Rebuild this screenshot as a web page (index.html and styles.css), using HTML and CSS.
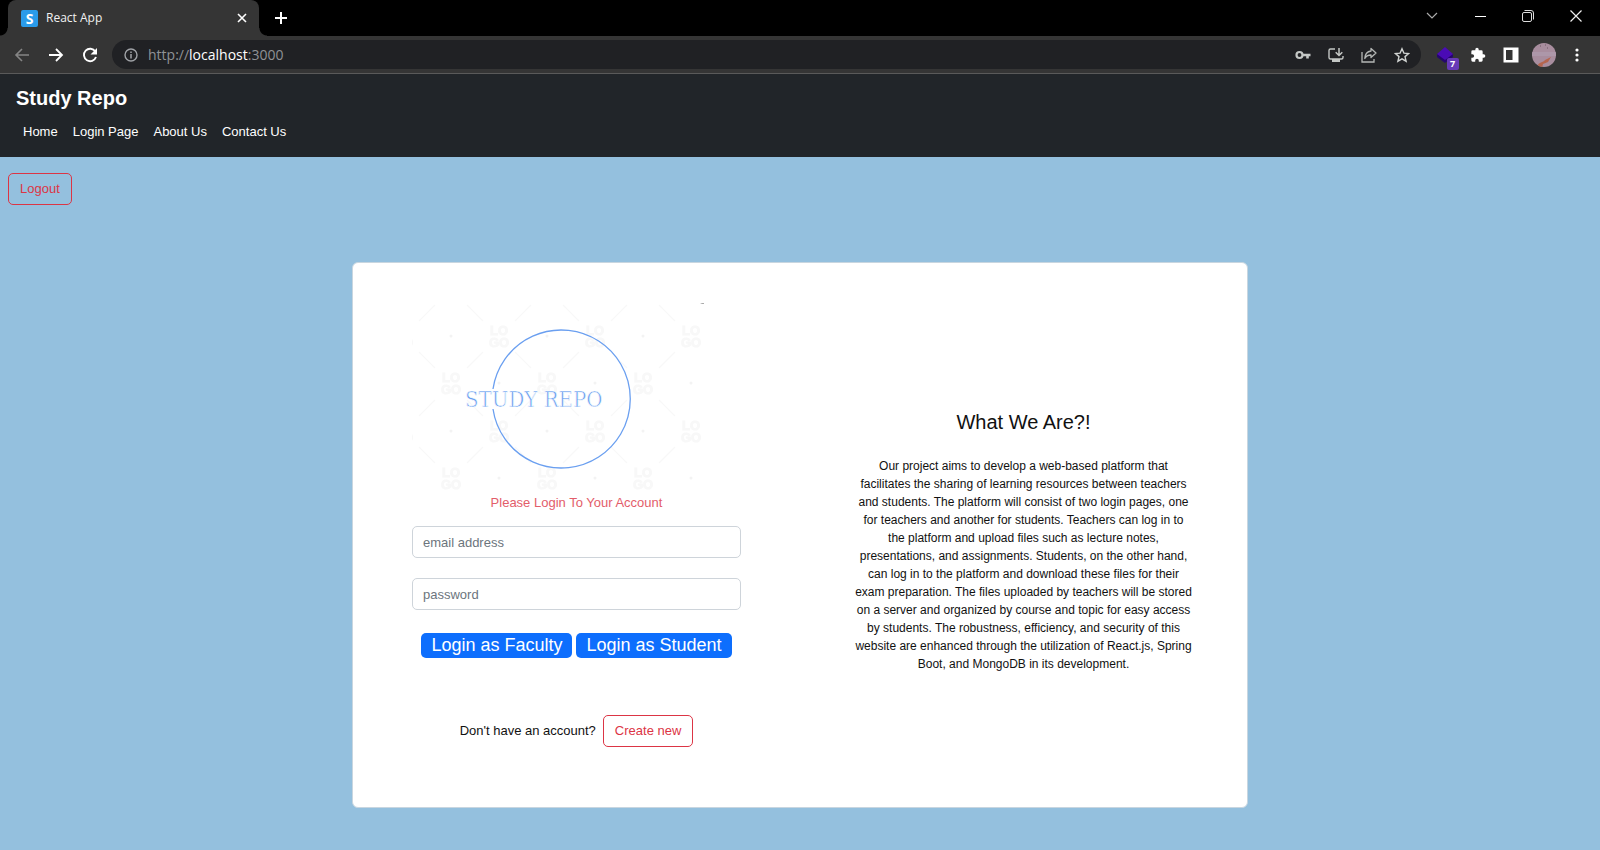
FILE: index.html
```html
<!DOCTYPE html>
<html lang="en">
<head>
<meta charset="utf-8">
<meta name="viewport" content="width=device-width, initial-scale=1">
<title>React App</title>
<link rel="stylesheet" href="styles.css">
</head>
<body>
<header class="browser">
  <div class="tabstrip">
    <div class="tab">
      <span class="favicon">S</span>
      <span class="tab-title">React App</span>
      <button class="icon-btn tab-close" aria-label="Close tab"><svg width="10" height="10" viewBox="0 0 10 10"><path d="M1 1l8 8M9 1l-8 8" stroke="#fff" stroke-width="1.6"/></svg></button>
    </div>
    <button class="icon-btn new-tab" aria-label="New tab"><svg width="14" height="14" viewBox="0 0 14 14"><path d="M7 1v12M1 7h12" stroke="#fff" stroke-width="2"/></svg></button>
    <div class="window-controls">
      <button class="icon-btn" aria-label="Search tabs"><svg width="12" height="12" viewBox="0 0 12 12"><path d="M1 3l5 5 5-5" fill="none" stroke="#aaa" stroke-width="1.2"/></svg></button>
      <button class="icon-btn" aria-label="Minimize"><svg width="12" height="12" viewBox="0 0 12 12"><path d="M1 6.500h11" stroke="#fff"/></svg></button>
      <button class="icon-btn" aria-label="Restore"><svg width="12" height="12" viewBox="0 0 12 12"><rect x=".5" y="2.500" width="9" height="9" rx="1.500" fill="none" stroke="#ddd"/><path d="M2.500 .5h6.500a2.500 2.500 0 0 1 2.500 2.500v6.500" fill="none" stroke="#ddd"/></svg></button>
      <button class="icon-btn" aria-label="Close"><svg width="12" height="12" viewBox="0 0 12 12"><path d="M.5 .5l11 11M11.500 .5l-11 11" stroke="#eee" stroke-width="1.200"/></svg></button>
    </div>
  </div>
  <div class="toolbar">
    <div class="nav-buttons">
      <button class="icon-btn" aria-label="Back"><svg width="16" height="16" viewBox="0 0 16 16"><path d="M15 8H2.500M8 2L2 8l6 6" fill="none" stroke="#858585" stroke-width="1.600"/></svg></button>
      <button class="icon-btn" aria-label="Forward"><svg width="16" height="16" viewBox="0 0 16 16"><path d="M1 8h12.500M8 2l6 6-6 6" fill="none" stroke="#fff" stroke-width="1.800"/></svg></button>
      <button class="icon-btn" aria-label="Reload"><svg width="16" height="16" viewBox="0 0 16 16"><path d="M13.300 4.500A6.200 6.200 0 1 0 14 10" fill="none" stroke="#fff" stroke-width="1.900"/><path d="M15 1v6.500H8.500z" fill="#fff"/></svg></button>
    </div>
    <div class="omnibox">
      <svg width="14" height="14" viewBox="0 0 14 14"><circle cx="7" cy="7" r="6" fill="none" stroke="#a0a3a7" stroke-width="1.400"/><path d="M7 6v4.500M7 3.400v1.600" stroke="#a0a3a7" stroke-width="1.500"/></svg>
      <span class="url">http://<span class="url-host">localhost</span>:3000</span>
      <span class="omnibox-actions">
        <svg width="16" height="16" viewBox="0 0 16 16"><circle cx="4.500" cy="8" r="3" fill="none" stroke="#c4c7c5" stroke-width="2.200"/><path d="M8 8h7.500M12.500 8v3.500" stroke="#c4c7c5" stroke-width="2.600" fill="none"/></svg>
        <svg width="16" height="16" viewBox="0 0 16 16"><path d="M7 2H2.500A1.500 1.500 0 0 0 1 3.500v7A1.500 1.500 0 0 0 2.500 12h11a1.500 1.500 0 0 0 1.500-1.500V9" fill="none" stroke="#c4c7c5" stroke-width="1.400"/><path d="M4 12h8v3H4z" fill="#c4c7c5"/><path d="M11 1v7M7.700 5.200L11 8.500l3.300-3.300" fill="none" stroke="#c4c7c5" stroke-width="1.500"/></svg>
        <svg width="16" height="16" viewBox="0 0 16 16"><path d="M1 5v10h12v-3" fill="none" stroke="#b4b7b5" stroke-width="1.300"/><path d="M10 1.500l5 4.500-5 4.500V8C7 8 5 9 3.800 11.500 4 7.500 6 4.500 10 4z" fill="none" stroke="#b4b7b5" stroke-width="1.300" stroke-linejoin="round"/></svg>
        <svg width="16" height="16" viewBox="0 0 16 16"><path d="M8 1.800l1.900 4.300 4.700.4-3.600 3.100 1.100 4.600L8 11.800l-4.100 2.400L5 9.600 1.400 6.500l4.700-.4z" fill="none" stroke="#d0d3d1" stroke-width="1.400"/></svg>
      </span>
    </div>
    <div class="extensions">
      <span class="extension">
        <svg width="18" height="18" viewBox="0 0 18 18"><path d="M1 8v3l8 6 8-6V8z" fill="#25066e"/><path d="M9 1l8 7-8 6-8-6z" fill="#4a0bb5"/></svg>
        <span class="badge">7</span>
      </span>
      <svg width="16" height="16" viewBox="0 0 24 24"><path d="M20.500 11H19V7a2 2 0 0 0-2-2h-4V3.500a2.500 2.500 0 0 0-5 0V5H4a2 2 0 0 0-2 2v3.800h1.500a2.700 2.700 0 0 1 0 5.400H2V20a2 2 0 0 0 2 2h3.800v-1.500a2.700 2.700 0 0 1 5.400 0V22H17a2 2 0 0 0 2-2v-4h1.500a2.500 2.500 0 0 0 0-5z" fill="#fff"/></svg>
      <svg width="16" height="16" viewBox="0 0 16 16"><path d="M.5 .5h15v15H.5zM3 3v10h6.500V3z" fill="#fff" fill-rule="evenodd"/></svg>
      <svg width="24" height="24" viewBox="0 0 24 24"><defs><clipPath id="face"><circle cx="12" cy="12" r="12"/></clipPath></defs><g clip-path="url(#face)"><path d="M0 0h24v24H0z" fill="#a88d9e"/><path d="M0 9h24v4H0z" fill="#ad97a9"/><path d="M5 24c2-6 6-4 8-7l6-3-3 5-5 2-1 4z" fill="#b5654e"/><path d="M8 3h1M13 2h1M15 5h1" stroke="#6e5665"/></g></svg>
      <svg width="16" height="16" viewBox="0 0 16 16"><g fill="#fff"><circle cx="8" cy="3" r="1.600"/><circle cx="8" cy="8" r="1.600"/><circle cx="8" cy="13" r="1.600"/></g></svg>
    </div>
  </div>
</header>

<div class="site-header">
  <div class="brand">Study Repo</div>
  <nav class="site-nav">
    <a href="#home">Home</a>
    <a href="#login">Login Page</a>
    <a href="#about">About Us</a>
    <a href="#contact">Contact Us</a>
  </nav>
</div>

<main class="page">
  <button class="btn btn-outline">Logout</button>
  <section class="card">
    <div class="login">
      <svg class="logo" width="292" height="190" viewBox="0 0 292 190" role="img" aria-label="Study Repo logo">
        <defs>
          <pattern id="watermark" x="15" y="10" width="96" height="95" patternUnits="userSpaceOnUse">
            <g class="mark" text-anchor="middle">
              <text x="72" y="23">LO</text><text x="72" y="35">GO</text>
              <text x="24" y="70">LO</text><text x="24" y="82">GO</text>
            </g>
            <path d="M56 40L40 56M88 40l16 16M-8 40L8 56M40-7L56 9M40 88l16 16M88 9l16-16M-8 9L8-7M88 104l16-16M-8 104L8 88" stroke="#f8f8f8" stroke-width="1.200"/>
            <circle cx="24" cy="24" r="1.500" fill="#f3f3f3"/><circle cx="72" cy="71" r="1.500" fill="#f3f3f3"/>
          </pattern>
        </defs>
        <path d="M0 0h292v190H0z" fill="url(#watermark)"/>
        <path d="M288 1h4v1h-2z" fill="#aaa"/>
        <path d="M81 87A69 69 0 1 1 81 107" fill="none" stroke="#6a9ff0" stroke-width="1.300"/>
        <text class="logo-text" x="53" y="105">STUDY REPO</text>
      </svg>
      <p class="prompt">Please Login To Your Account</p>
      <form class="fields">
        <input class="field" type="email" placeholder="email address" aria-label="email address">
        <input class="field" type="password" placeholder="password" aria-label="password">
        <div class="actions">
          <button class="btn-primary" type="button">Login as Faculty</button>
          <button class="btn-primary" type="button">Login as Student</button>
        </div>
      </form>
      <div class="signup">
        <span>Don't have an account?</span>
        <button class="btn btn-outline">Create new</button>
      </div>
    </div>
    <div class="about">
      <h2 class="about-title">What We Are?!</h2>
      <p class="about-text">Our project aims to develop a web-based platform that facilitates the sharing of learning resources between teachers and students. The platform will consist of two login pages, one for teachers and another for students. Teachers can log in to the platform and upload files such as lecture notes, presentations, and assignments. Students, on the other hand, can log in to the platform and download these files for their exam preparation. The files uploaded by teachers will be stored on a server and organized by course and topic for easy access by students. The robustness, efficiency, and security of this website are enhanced through the utilization of React.js, Spring Boot, and MongoDB in its development.</p>
    </div>
  </section>
</main>
</body>
</html>
```
FILE: styles.css
```css
* {
  box-sizing: border-box;
}

body {
  display: flex;
  flex-direction: column;
  min-height: 100vh;
  margin: 0;
  background: #94c0de;
  color: #111;
  font-family: "Liberation Sans", Arial, sans-serif;
  font-size: 13px;
  line-height: 20px;
}

button,
input {
  font: inherit;
}

svg {
  display: block;
  flex: none;
}

/* Browser chrome */
.browser {
  border-bottom: 1px solid #5a5a5a;
  background: #353535;
  font-family: "Open Sans", "Noto Sans", sans-serif;
}

.icon-btn {
  display: flex;
  padding: 0;
  border: 0;
  background: none;
}

.tabstrip {
  display: flex;
  align-items: center;
  height: 36px;
  padding-left: 8px;
  background: #000;
}

.tab {
  position: relative;
  display: flex;
  align-items: center;
  gap: 8px;
  width: 251px;
  height: 36px;
  padding: 0 12px 0 13px;
  border-radius: 8px 8px 0 0;
  background: #353535;
  color: #f1f1f1;
  font-size: 12px;
}

/* Flared feet of the active tab */
.tab::before,
.tab::after {
  content: "";
  position: absolute;
  bottom: 0;
  width: 8px;
  height: 8px;
}

.tab::before {
  right: 100%;
  background: radial-gradient(circle at 0 0, #000 7px, #353535 8px);
}

.tab::after {
  left: 100%;
  background: radial-gradient(circle at 100% 0, #000 7px, #353535 8px);
}

.favicon {
  width: 17px;
  height: 17px;
  border-radius: 2px;
  background: #2a9bea;
  color: #fff;
  font-size: 14px;
  font-weight: 700;
  line-height: 17px;
  text-align: center;
}

.tab-close {
  margin-left: auto;
}

.new-tab {
  margin-left: 15px;
}

.window-controls {
  display: flex;
  gap: 36px;
  margin-left: auto;
  padding: 0 18px 4px 0;
}

.toolbar {
  display: flex;
  align-items: center;
  height: 37px;
  padding: 0 7px 0 14px;
}

.nav-buttons {
  display: flex;
  gap: 18px;
}

.omnibox {
  display: flex;
  flex: 1;
  align-items: center;
  gap: 10px;
  height: 29px;
  margin: 0 7px 0 14px;
  padding: 0 11px 0 12px;
  border-radius: 15px;
  background: #202124;
}

.url {
  color: #8f9296;
  font-size: 14px;
}

.url-host {
  color: #fff;
}

.omnibox-actions {
  display: flex;
  gap: 17px;
  margin-left: auto;
}

.extensions {
  display: grid;
  grid-template-columns: repeat(5, 33px);
  align-items: center;
  justify-items: center;
}

.extension {
  position: relative;
}

.badge {
  position: absolute;
  right: -5px;
  bottom: -6px;
  width: 12px;
  height: 12px;
  border-radius: 2px;
  background: #673ab7;
  color: #fff;
  font-size: 9px;
  font-weight: 700;
  line-height: 12px;
  text-align: center;
}

/* Site header */
.site-header {
  padding: 12px 16px 15px;
  background: #212529;
  color: #fff;
}

.brand {
  font-size: 20px;
  font-weight: 700;
  line-height: 24px;
}

.site-nav {
  display: flex;
  gap: 15px;
  padding: 12px 7px 0;
}

.site-nav a {
  color: #fff;
  text-decoration: none;
}

/* Buttons */
.btn {
  height: 32px;
  padding: 0 11px;
  border: 1px solid #dc3545;
  border-radius: 5px;
}

.btn-outline {
  background: transparent;
  color: #dc3545;
}

.btn-primary {
  height: 25px;
  padding: 0 10px;
  border: 0;
  border-radius: 5px;
  background: #0d6efd;
  color: #fff;
  font-size: 18px;
  line-height: 25px;
}

/* Login page */
.page {
  flex: 1;
  padding: 16px 8px;
}

.card {
  display: grid;
  grid-template-columns: 1fr 1fr;
  width: 56vw;
  min-width: 720px;
  margin: 57px auto 27px;
  border: 1px solid #c8d6e0;
  border-radius: 6px;
  background: #fff;
}

.login {
  padding: 39px 59px 60px;
}

.prompt {
  margin: 1px 0 13px;
  color: #e35d6a;
  text-align: center;
}

.fields {
  display: grid;
  gap: 20px;
}

.field {
  width: 100%;
  height: 32px;
  padding: 0 10px;
  border: 1px solid #ced4da;
  border-radius: 5px;
}

.field::placeholder {
  color: #6c757d;
  opacity: 1;
}

.actions {
  display: flex;
  justify-content: center;
  gap: 4px;
  padding-top: 3px;
}

.signup {
  display: flex;
  align-items: center;
  justify-content: center;
  gap: 7px;
  margin-top: 57px;
}

.about {
  display: flex;
  flex-direction: column;
  justify-content: center;
  padding: 12px 55px 0;
  text-align: center;
}

.about-title {
  margin: 0 0 23px;
  font-size: 20px;
  font-weight: 400;
  line-height: 24px;
}

.about-text {
  margin: 0;
  font-size: 12px;
  line-height: 18px;
}

/* Logo */
.logo-text {
  fill: #6a9ff0;
  stroke: #fff;
  stroke-width: 0.6px;
  font-family: "DejaVu Serif Condensed", "DejaVu Serif", serif;
  font-size: 22px;
}

.mark {
  fill: #f8f8f8;
  stroke: #f8f8f8;
  font-size: 13px;
  font-weight: 700;
}
```
